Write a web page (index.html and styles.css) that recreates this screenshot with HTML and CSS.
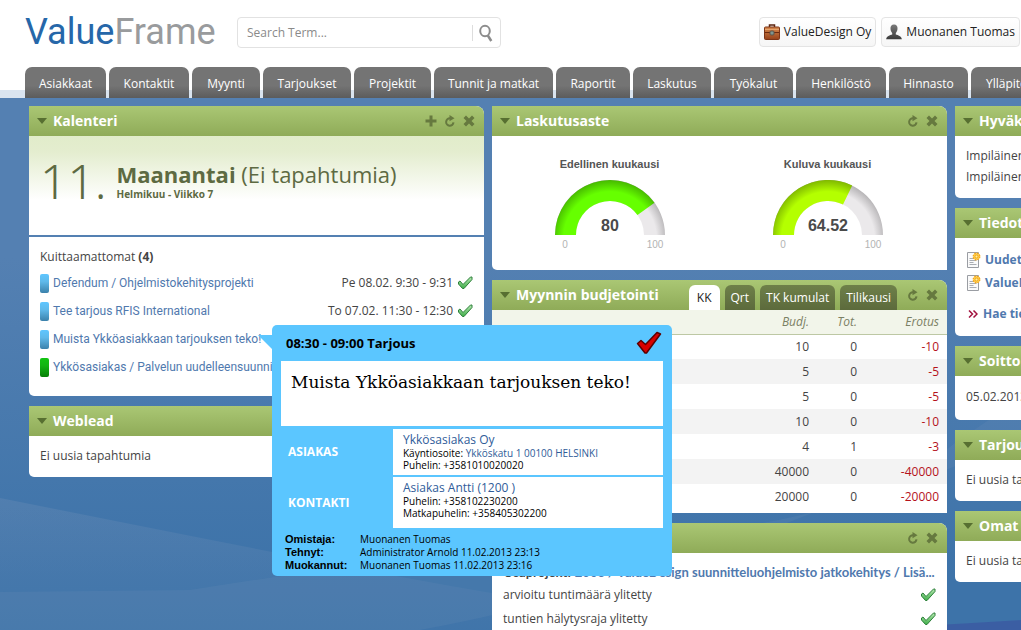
FILE: index.html
```html
<!DOCTYPE html>
<html lang="fi">
<head>
<meta charset="utf-8">
<title>ValueFrame</title>
<link rel="stylesheet" href="styles.css">
</head>
<body>
<svg class="defs" width="0" height="0" aria-hidden="true">
  <defs>
    <linearGradient id="tick" x1="0" y1="0" x2="0" y2="1"><stop offset="0" stop-color="#b5e8b0"/><stop offset="1" stop-color="#3fae49"/></linearGradient>
    <linearGradient id="case" x1="0" y1="0" x2="0" y2="1"><stop offset="0" stop-color="#d98a4e"/><stop offset="1" stop-color="#96411a"/></linearGradient>
    <linearGradient id="man" x1="0" y1="0" x2="0" y2="1"><stop offset="0" stop-color="#7a7a7a"/><stop offset="1" stop-color="#3c3c3c"/></linearGradient>
    <radialGradient id="g-green" gradientUnits="userSpaceOnUse" cx="55" cy="58" r="58"><stop offset=".8" stop-color="#66ff00"/><stop offset="1" stop-color="#46b800"/></radialGradient>
    <radialGradient id="g-lime" gradientUnits="userSpaceOnUse" cx="55" cy="58" r="58"><stop offset=".8" stop-color="#b4ff00"/><stop offset="1" stop-color="#80b800"/></radialGradient>
    <radialGradient id="g-grey" gradientUnits="userSpaceOnUse" cx="55" cy="58" r="58"><stop offset=".8" stop-color="#ebe9eb"/><stop offset="1" stop-color="#b4b2b4"/></radialGradient>
    <symbol id="i-plus" viewBox="0 0 12 12"><path d="M4.500 0.500h3v4h4v3h-4v4h-3v-4h-4v-3h4z"/></symbol>
    <symbol id="i-refresh" viewBox="0 0 12 12"><path d="M6 3.300A3.700 3.700 0 1 0 9.500 7.400" fill="none" stroke="currentColor" stroke-width="2"/><path d="M5.500 0 10.500 3.200 5.500 6.200z"/></symbol>
    <symbol id="i-close" viewBox="0 0 12 12"><path d="M3 .5 6 3.500 9 .5 11.500 3 8.500 6 11.500 9 9 11.500 6 8.500 3 11.500 .5 9 3.500 6 .5 3z"/></symbol>
    <symbol id="i-tick" viewBox="0 0 16 14"><path d="M1.500 6 3 5 6 8.500 13.500 1H15V3.500L7 12.500H5.500L1.500 8z" fill="url(#tick)" stroke="#2c7f3a" stroke-width="1"/></symbol>
    <symbol id="i-news" viewBox="0 0 14 16"><path d="M.5.5h11v15H.5z" fill="#fafafa" stroke="#9a9da3"/><path d="M2.500 6.500h5M2.500 8.500h7M2.500 10.500h4M2.500 12.500h7" stroke="#a9adb3"/><circle cx="9.500" cy="4.500" r="3.200" fill="#ffd75a" stroke="#f5a81c" stroke-width="1.500" stroke-dasharray="1.600 .9"/><circle cx="9.500" cy="4.500" r="1.500" fill="#fff0a0" stroke="#f2a516"/></symbol>
  </defs>
</svg>

<header class="top">
  <div class="bar">
    <a class="logo" href="#"><span class="logo-value">Value</span><span class="logo-frame">Frame</span></a>
    <form class="search">
      <input type="text" placeholder="Search Term..." aria-label="Search Term">
      <button type="button" aria-label="Search"><svg width="14" height="18" viewBox="0 0 14 18"><ellipse cx="6" cy="7" rx="4.800" ry="5.200" fill="none" stroke="#8c8c8c" stroke-width="2"/><path d="M8.800 11.500 12.300 17" stroke="#8c8c8c" stroke-width="2.500"/></svg></button>
    </form>
    <div class="account">
      <button type="button"><svg width="16" height="16" viewBox="0 0 16 16"><path d="M5.500 3V1h5v2" fill="none" stroke="#5b2411" stroke-width="1.500"/><rect x=".5" y="3" width="15" height="12.500" rx="1" fill="url(#case)" stroke="#7d3517"/><path d="M1 8.500h14" stroke="#6b2a10"/><path d="M1 5.500h14" stroke="#e5a56f"/><rect x="6" y="7" width="4" height="4" rx="1" fill="#7f9690" stroke="#5c5146"/></svg>ValueDesign Oy</button>
      <button type="button"><svg width="16" height="16" viewBox="0 0 16 16"><path d="M8 .5c2.500 0 3.700 1.800 3.500 4.300-.1 2-.9 3.400-1.700 4.200v1.500c2.200.7 5.700 1.500 6 4.700H.2c.3-3.200 3.800-4 6-4.700V9C5.400 8.200 4.600 6.800 4.500 4.800 4.300 2.300 5.500.5 8 .5z" fill="url(#man)"/></svg>Muonanen Tuomas</button>
    </div>
  </div>
  <nav class="tabs">
    <a href="#">Asiakkaat</a><a href="#">Kontaktit</a><a href="#">Myynti</a><a href="#">Tarjoukset</a><a href="#">Projektit</a><a href="#">Tunnit ja matkat</a><a href="#">Raportit</a><a href="#">Laskutus</a><a href="#">Työkalut</a><a href="#">Henkilöstö</a><a href="#">Hinnasto</a><a class="last" href="#">Ylläpito</a>
  </nav>
</header>

<main class="board">
  <svg class="swoosh" viewBox="0 0 1021 532" preserveAspectRatio="none" aria-hidden="true">
    <defs>
      <linearGradient id="s1" x1="0" y1="0" x2="0" y2="1"><stop offset="0" stop-color="#7d97bb" stop-opacity=".25"/><stop offset="1" stop-color="#7d97bb" stop-opacity=".05"/></linearGradient>
    </defs>
    <path d="M0 400Q140 428 272 454 400 480 520 500L520 532H0z" fill="url(#s1)"/>
    <path d="M190 492Q520 440 730 430 880 410 955 345L1021 300V340Q900 395 820 412 600 500 420 532H0V494z" fill="#8fa5c2" opacity=".1"/>
    <path d="M800 532Q900 530 1021 522V532z" fill="#3b50a0" opacity=".6"/>
  </svg>

  <div class="col">
    <section class="panel">
      <header class="head"><i class="caret"></i><h2>Kalenteri</h2><span class="tools"><button type="button" aria-label="Lisää"><svg width="12" height="12"><use href="#i-plus"/></svg></button><button type="button" aria-label="Päivitä"><svg width="12" height="12"><use href="#i-refresh"/></svg></button><button type="button" aria-label="Sulje"><svg width="12" height="12"><use href="#i-close"/></svg></button></span></header>
      <div class="day">
        <span class="date">11.</span>
        <div><p class="weekday"><b>Maanantai</b> (Ei tapahtumia)</p><p class="week">Helmikuu - Viikko 7</p></div>
      </div>
      <div class="events">
        <p>Kuittaamattomat <b>(4)</b></p>
        <ul>
          <li><i class="chip"></i><a href="#">Defendum / Ohjelmistokehitysprojekti</a><time>Pe 08.02. 9:30 - 9:31</time><svg width="16" height="14"><use href="#i-tick"/></svg></li>
          <li><i class="chip"></i><a href="#">Tee tarjous RFIS International</a><time>To 07.02. 11:30 - 12:30</time><svg width="16" height="14"><use href="#i-tick"/></svg></li>
          <li><i class="chip"></i><a href="#">Muista Ykköasiakkaan tarjouksen teko!</a></li>
          <li><i class="chip green"></i><a href="#">Ykkösasiakas / Palvelun uudelleensuunnittelu</a></li>
        </ul>
      </div>
    </section>
    <section class="panel">
      <header class="head"><i class="caret"></i><h2>Weblead</h2></header>
      <div class="note">Ei uusia tapahtumia</div>
    </section>
  </div>

  <div class="col">
    <section class="panel">
      <header class="head"><i class="caret"></i><h2>Laskutusaste</h2><span class="tools"><button type="button" aria-label="Päivitä"><svg width="12" height="12"><use href="#i-refresh"/></svg></button><button type="button" aria-label="Sulje"><svg width="12" height="12"><use href="#i-close"/></svg></button></span></header>
      <div class="gauges">
        <figure>
          <figcaption>Edellinen kuukausi</figcaption>
          <svg width="110" height="72" viewBox="0 0 110 72">
            <path d="M0 55A55 55 0 0 1 110 55H89A34 34 0 0 0 21 55z" fill="url(#g-grey)"/>
            <path d="M0 55A55 55 0 0 1 99.500 22.700L82.500 35A34 34 0 0 0 21 55z" fill="url(#g-green)"/>
            <text class="value" x="55" y="51">80</text><text class="limit" x="10" y="68">0</text><text class="limit" x="100" y="68">100</text>
          </svg>
        </figure>
        <figure>
          <figcaption>Kuluva kuukausi</figcaption>
          <svg width="110" height="72" viewBox="0 0 110 72">
            <path d="M0 55A55 55 0 0 1 110 55H89A34 34 0 0 0 21 55z" fill="url(#g-grey)"/>
            <path d="M0 55A55 55 0 0 1 79.200 5.600L70 24.500A34 34 0 0 0 21 55z" fill="url(#g-lime)"/>
            <text class="value" x="55" y="51">64.52</text><text class="limit" x="10" y="68">0</text><text class="limit" x="100" y="68">100</text>
          </svg>
        </figure>
      </div>
    </section>

    <section class="panel">
      <header class="head"><i class="caret"></i><h2>Myynnin budjetointi</h2>
        <div class="periods"><button type="button" class="on">KK</button><button type="button">Qrt</button><button type="button">TK kumulat</button><button type="button">Tilikausi</button></div>
        <span class="tools"><button type="button" aria-label="Päivitä"><svg width="12" height="12"><use href="#i-refresh"/></svg></button><button type="button" aria-label="Sulje"><svg width="12" height="12"><use href="#i-close"/></svg></button></span></header>
      <div class="budget">
        <table>
          <thead><tr><th>Budj.</th><th class="tot">Tot.</th><th class="diff">Erotus</th></tr></thead>
          <tbody>
            <tr><td>10</td><td>0</td><td>-10</td></tr>
            <tr><td>5</td><td>0</td><td>-5</td></tr>
            <tr><td>5</td><td>0</td><td>-5</td></tr>
            <tr><td>10</td><td>0</td><td>-10</td></tr>
            <tr><td>4</td><td>1</td><td>-3</td></tr>
            <tr><td>40000</td><td>0</td><td>-40000</td></tr>
            <tr><td>20000</td><td>0</td><td>-20000</td></tr>
          </tbody>
        </table>
      </div>
    </section>

    <section class="panel">
      <header class="head"><i class="caret"></i><span class="tools"><button type="button" aria-label="Päivitä"><svg width="12" height="12"><use href="#i-refresh"/></svg></button><button type="button" aria-label="Sulje"><svg width="12" height="12"><use href="#i-close"/></svg></button></span></header>
      <div class="alerts">
        <p class="project">Osaprojekti <a href="#">2003 / ValueDesign suunnitteluohjelmisto jatkokehitys / Lisä...</a></p>
        <p>arvioitu tuntimäärä ylitetty<svg width="16" height="14"><use href="#i-tick"/></svg></p>
        <p>tuntien hälytysraja ylitetty<svg width="16" height="14"><use href="#i-tick"/></svg></p>
      </div>
    </section>
  </div>

  <div class="col side">
    <section class="panel"><header class="head"><i class="caret"></i><h2>Hyväksynnät</h2></header>
      <div class="approvals"><p>Impiläinen</p><p>Impiläinen</p></div></section>
    <section class="panel"><header class="head"><i class="caret"></i><h2>Tiedotteet</h2></header>
      <div class="news">
        <a href="#"><svg width="14" height="16"><use href="#i-news"/></svg>Uudet</a>
        <a href="#"><svg width="14" height="16"><use href="#i-news"/></svg>ValueDesign</a>
        <a class="more" href="#"><svg width="10" height="8" viewBox="0 0 10 8"><path d="M1 .5 4.500 4 1 7.500M5.500 .5 9 4 5.500 7.500" fill="none" stroke="#a3123f" stroke-width="1.500"/></svg>Hae tiedotteita</a>
      </div></section>
    <section class="panel"><header class="head"><i class="caret"></i><h2>Soittopyynnöt</h2></header>
      <div class="note calls">05.02.2013</div></section>
    <section class="panel"><header class="head"><i class="caret"></i><h2>Tarjoukset</h2></header>
      <div class="note">Ei uusia tapahtumia</div></section>
    <section class="panel"><header class="head"><i class="caret"></i><h2>Omat tehtävät</h2></header>
      <div class="note">Ei uusia tapahtumia</div></section>
  </div>

  <aside class="popup">
    <header><b>08:30 - 09:00 Tarjous</b><svg width="26" height="24" viewBox="0 0 26 24"><path d="M1.500 12.500 5 9.500 9.500 13.500 21 1.500 24.500 3 10.500 22 9 22z" fill="#d80000" stroke="#5c0000" stroke-width="1.500" stroke-linejoin="round"/></svg></header>
    <p class="subject">Muista Ykköasiakkaan tarjouksen teko!</p>
    <div class="info">
      <b>ASIAKAS</b>
      <div><a href="#">Ykkösasiakas Oy</a><p>Käyntiosoite: <span>Ykköskatu 1 00100 HELSINKI</span></p><p>Puhelin: +3581010020020</p></div>
      <b>KONTAKTI</b>
      <div class="contact"><a href="#">Asiakas Antti (1200 )</a><p>Puhelin: +358102230200</p><p>Matkapuhelin: +358405302200</p></div>
    </div>
    <dl><dt>Omistaja:</dt><dd>Muonanen Tuomas</dd><dt>Tehnyt:</dt><dd>Administrator Arnold 11.02.2013 23:13</dd><dt>Muokannut:</dt><dd>Muonanen Tuomas 11.02.2013 23:16</dd></dl>
  </aside>
</main>
</body>
</html>
```

FILE: styles.css
```css
* { box-sizing: border-box; }
html { height: 100%; }
body {
  margin: 0;
  height: 100vh;
  overflow: hidden;
  display: flex;
  flex-direction: column;
  background: #fff;
  color: #444;
  font: 12px/20px "Open Sans", "Noto Sans", sans-serif;
}
p, h2, ul, dl, dd, figure { margin: 0; padding: 0; }
ul { list-style: none; }
a { color: #5079ae; text-decoration: none; }
button { font: inherit; color: inherit; cursor: pointer; }
svg { flex: none; display: block; }
.defs { position: absolute; }

/* Top bar */
.top { flex: none; background: linear-gradient(#fff 90px, #dae4ef 90px); }
.bar { display: flex; align-items: flex-start; height: 67px; padding: 17px 1px 0 25px; }
.logo { width: 212px; margin-top: -5px; font: 36px/40px Roboto, sans-serif; white-space: nowrap; }
.logo-value { color: #2667a9; }
.logo-frame { color: #999b9d; }
.search {
  display: flex;
  align-items: center;
  width: 264px;
  height: 31px;
  border: 1px solid #e2e2e2;
  border-radius: 4px;
}
.search input {
  flex: 1;
  min-width: 0;
  border: 0;
  outline: 0;
  padding: 0 9px;
  background: none;
  font: inherit;
  color: #444;
}
.search input::placeholder { color: #8a8a8a; opacity: 1; }
.search button {
  display: flex;
  padding: 0 7px 0 6px;
  height: 16px;
  align-items: center;
  border: 0;
  border-left: 1px solid #ddd;
  background: none;
}
.account { display: flex; gap: 5px; margin-left: auto; }
.account button {
  display: flex;
  align-items: center;
  gap: 4px;
  height: 30px;
  padding: 0 4px;
  border: 1px solid #e4e4e4;
  border-radius: 4px;
  background: linear-gradient(#fff, #f6f6f6);
  color: #222;
  white-space: nowrap;
}
.tabs {
  display: grid;
  grid-template-columns: 81fr 80fr 68fr 88fr 77fr 119fr 74fr 78fr 79fr 90fr 79fr 50fr;
  gap: 3px;
  padding-left: 25px;
}
.tabs a {
  height: 31px;
  padding-top: 7px;
  border-radius: 7px 7px 0 0;
  background: linear-gradient(#747474 60%, #5c5c5c);
  color: #fff;
  text-align: center;
  white-space: nowrap;
  overflow: hidden;
}
.tabs .last { padding-left: 15px; border-radius: 7px 0 0 0; text-align: left; }

/* Board */
.board {
  position: relative;
  flex: 1;
  min-height: 0;
  display: grid;
  grid-template-columns: minmax(0, 1fr) minmax(0, 1fr) 66px;
  align-items: start;
  gap: 8px;
  padding: 8px 0 0 29px;
  overflow: hidden;
  background: linear-gradient(#5480b2, #5480b2 30%, #3d73a9 90%);
}
.swoosh { position: absolute; inset: 0; width: 100%; height: 100%; }
.col { position: relative; display: flex; flex-direction: column; gap: 10px; }
.side { overflow: hidden; }
.side .panel { min-width: 300px; }
.panel { background: #fff; border-radius: 0 8px 0 5px; white-space: nowrap; overflow: hidden; }
.head {
  display: flex;
  align-items: center;
  height: 30px;
  padding: 0 9px 0 8px;
  background: linear-gradient(#aac774, #8fab58);
}
.head h2 { font-size: 14px; line-height: 20px; color: #fff; }
.caret { margin-right: 6px; border: 5px solid transparent; border-top: 6px solid #576f31; border-bottom: 0; }
.tools { display: flex; gap: 7px; margin-left: auto; color: #66793f; }
.tools button { padding: 0; border: 0; background: none; }
.tools svg { fill: currentColor; }

.day {
  display: flex;
  gap: 10px;
  height: 101px;
  padding: 15px 11px 0;
  border-bottom: 2px solid #5480b2;
  background: linear-gradient(#e1ecca, #e4edcf 16px, #fff 64px);
  color: #5d6a42;
}
.date { font: 48px/60px "Noto Sans", "Open Sans", sans-serif; font-weight: 300; }
.weekday { padding-top: 11px; font-size: 22px; line-height: 24px; }
.week { padding-top: 3px; font-size: 10px; line-height: 10px; font-weight: bold; }
.events { padding: 10px 11px 15px; }
.events ul { padding-top: 2px; }
.events li { display: flex; align-items: center; height: 28px; }
.events li a { font-family: Roboto, "Open Sans", sans-serif; }
.events time { margin: 0 4px 0 auto; }
.chip { width: 9px; height: 19px; margin-right: 4px; border-radius: 2px; background: linear-gradient(#5fc6ff, #5fb9ea 40%, #3b81ab); }
.chip.green { background: linear-gradient(#12c412, #12b412 40%, #067f06); }
.note { padding: 10px 11px 11px; }
.calls { padding: 11px 11px 13px; }

.gauges { display: flex; justify-content: center; height: 134px; padding: 18px 2px 0 0; }
.gauges figure { width: 218px; display: flex; flex-direction: column; align-items: center; gap: 6px; }
figcaption { font: bold 11px/20px "Liberation Sans", Arial, sans-serif; color: #555; }
.value, .limit { font-family: "Liberation Sans", Arial, sans-serif; text-anchor: middle; }
.value { font-size: 16px; font-weight: bold; fill: #4a4a4a; }
.limit { font-size: 10px; fill: #b3b3b3; }

.periods { display: flex; align-self: flex-end; gap: 5px; margin-left: auto; }
.periods + .tools { margin-left: 10px; }
.periods button {
  height: 25px;
  padding: 0 6px;
  border: 0;
  border-radius: 6px 6px 0 0;
  background: linear-gradient(#6e8049, #5c6a3c);
  color: #fff;
}
.periods .on { padding: 0 8px; background: #fff; color: #222; }
.budget { padding-bottom: 4px; }
table { width: 100%; border-collapse: collapse; table-layout: fixed; text-align: right; }
th { height: 24px; padding: 0; background: #f2f5ea; border-bottom: 1px solid #bdc8a4; color: #7b8064; font-weight: normal; font-style: italic; }
.tot { width: 48px; }
.diff { width: 90px; }
td { height: 25px; padding: 0; }
th:last-child, td:last-child { padding-right: 8px; }
td:last-child { color: #b5121b; }
tbody tr:nth-child(even) { background: #f3f3f3; }

.alerts { padding: 8px 11px; }
.alerts p { display: flex; align-items: center; justify-content: space-between; height: 24px; }
.alerts .project { justify-content: flex-start; gap: 4px; height: 22px; font: bold 13px/20px Lato, "Open Sans", sans-serif; }

.approvals { padding: 9px 11px 11px; line-height: 21px; }
.news { padding: 10px 12px 11px; font-weight: bold; }
.news a { display: flex; align-items: center; gap: 4px; height: 23px; }
.news .more { height: 31px; padding: 9px 1px 0; gap: 5px; }

/* Event popup */
.popup {
  position: absolute;
  left: 272px;
  top: 227px;
  width: 400px;
  padding-bottom: 4px;
  border-radius: 5px;
  background: #5bc6ff;
  color: #000;
}
.popup::before {
  content: "";
  position: absolute;
  left: -14px;
  top: 10px;
  border: 7px solid transparent;
  border-top-color: #5bc6ff;
  border-right-color: #5bc6ff;
}
.popup header { display: flex; align-items: center; justify-content: space-between; height: 36px; padding: 0 10px 0 14px; }
.popup header b { font-size: 13px; }
.subject { height: 65px; margin: 0 9px; padding: 10px; background: #fff; font: 17px/22px "DejaVu Serif", Georgia, serif; }
.info { display: grid; grid-template-columns: 112px 1fr; align-items: center; gap: 2px 0; margin: 3px 9px 0; }
.info > b { padding-left: 7px; color: #fff; }
.info > div { height: 46px; padding: 4px 10px; background: #fff; font-size: 10px; line-height: 12px; }
.info > .contact { height: 51px; }
.info a { display: block; font-size: 12px; line-height: 14px; }
.info a, .info span { color: #2f5c99; }
.popup dl { display: grid; grid-template-columns: 75px 1fr; padding: 5px 13px 0; font-size: 10px; line-height: 13px; }
dt { font: bold 11px/13px "Liberation Sans", Arial, sans-serif; }
```
